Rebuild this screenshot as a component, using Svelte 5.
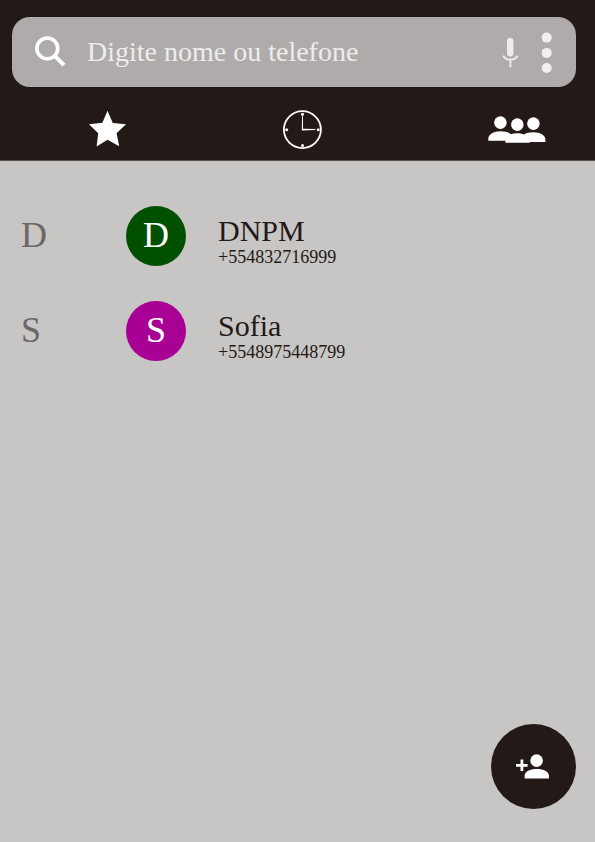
<script>
  let query = $state('');

  const contacts = [
    { name: 'DNPM', phone: '+554832716999', color: '#005000' },
    { name: 'Sofia', phone: '+5548975448799', color: '#a80094' }
  ];

  const shown = $derived(
    contacts.filter((c) => (c.name + c.phone).toLowerCase().includes(query.toLowerCase()))
  );
</script>

<div class="app">
  <header>
    <form class="search" role="search">
      <button type="submit" class="icon" aria-label="Buscar">
        <svg width="34" height="34" viewBox="33 34 34 34">
          <circle cx="47.3" cy="47.4" r="10.4" fill="none" stroke="#fff" stroke-width="3.7" />
          <path d="M54.5 54.7L64 64.2" stroke="#fff" stroke-width="4" />
        </svg>
      </button>
      <input type="text" bind:value={query} placeholder="Digite nome ou telefone" aria-label="Digite nome ou telefone" />
      <button type="button" class="icon" aria-label="Busca por voz">
        <svg width="18" height="32" viewBox="502 36 18 32">
          <rect x="507" y="38" width="6.4" height="18.4" rx="2.8" fill="#ededed" />
          <path d="M503.3 55.6C505.5 61 515.3 61 517.5 55.6M510.4 59.5V67.2" fill="none" stroke="#ededed" stroke-width="1.9" />
        </svg>
      </button>
      <button type="button" class="icon more" aria-label="Mais opções">
        <svg width="12" height="42" viewBox="541 31 12 42">
          <g fill="#f0f0f0">
            <circle cx="546.7" cy="37.6" r="5" />
            <circle cx="546.7" cy="52.9" r="5" />
            <circle cx="546.7" cy="68" r="5" />
          </g>
        </svg>
      </button>
    </form>

    <nav>
      <button type="button" class="icon" aria-label="Favoritos">
        <svg width="38" height="40" viewBox="89 109 38 40">
          <path d="M107.5 110.7L112.8 122.9L126 124.3L116.6 133.2L119.2 146.2L107.5 139.8L96.6 146.4L98.2 133.2L89 124.3L102.4 122.7Z" fill="#fff" />
        </svg>
      </button>
      <button type="button" class="icon" aria-label="Recentes">
        <svg width="40" height="40" viewBox="283 109 40 40">
          <circle cx="302.4" cy="129.6" r="18.5" fill="none" stroke="#fff" stroke-width="1.8" />
          <g fill="#fff">
            <circle cx="302.5" cy="114.2" r="1.5" />
            <circle cx="302.5" cy="145.4" r="1.5" />
            <circle cx="286.7" cy="129.7" r="1.5" />
            <circle cx="318.2" cy="129.7" r="1.5" />
            <path d="M302.1 115.5H302.9L303.1 128.8L315.3 129.1V130L301.8 130.4Z" />
          </g>
        </svg>
      </button>
      <button type="button" class="icon groups" aria-label="Contatos">
        <svg width="60" height="40" viewBox="487 109 60 40">
          <g fill="#fff">
            <circle cx="500.4" cy="122.6" r="6.3" />
            <circle cx="533.4" cy="123.6" r="6.3" />
            <circle cx="517.3" cy="124.6" r="6.3" />
            <path d="M488.3 140.8V138.5C488.3 134.3 494 131.2 500.4 131.2C505 131.2 508.6 132.3 510.8 134.2C514.8 132.8 520 132.8 523.8 134.4C526 133 529.5 132.2 533.4 132.2C539.8 132.2 545.4 135 545.4 139.2V141.9H529.6V142.8H505.4V140.8Z" />
          </g>
        </svg>
      </button>
    </nav>
  </header>

  <main>
    <ul>
      {#each shown as contact (contact.phone)}
        <li>
          <span class="index">{contact.name[0]}</span>
          <span class="avatar" style="background: {contact.color}">{contact.name[0]}</span>
          <div class="info">
            <span class="name">{contact.name}</span>
            <a href="tel:{contact.phone}">{contact.phone}</a>
          </div>
        </li>
      {/each}
    </ul>
  </main>

  <button type="button" class="fab" aria-label="Adicionar contato">
    <svg width="37" height="29" viewBox="515 752 37 29">
      <g fill="#fff">
        <circle cx="536.6" cy="760.6" r="6.3" />
        <path d="M524.6 778.6V775.6C524.6 771.6 530 769 536.7 769C543.4 769 548.9 771.6 548.9 775.6V778.6Z" />
        <path d="M516 763.9H520.5V759.5H523.3V763.9H527.6V766.7H523.3V771H520.5V766.7H516Z" />
      </g>
    </svg>
  </button>
</div>

<style>
  :global(body) {
    background: #c8c6c4;
  }

  .app {
    min-height: 100vh;
    font-family: 'Liberation Serif', 'Times New Roman', serif;
    color: #231916;
  }

  button {
    border: 0;
    padding: 0;
    cursor: pointer;
  }

  svg {
    display: block;
  }

  header {
    padding: 17px 0 0;
    background: #231916;
    border-bottom: 1px solid #5a4e4b;
  }

  .search {
    display: flex;
    align-items: center;
    height: 70px;
    margin: 0 19px 0 12px;
    padding: 0 23px 0 21px;
    border-radius: 18px;
    background: #afabaa;
  }

  .icon {
    flex: none;
    background: none;
  }

  .more {
    margin-left: 21px;
  }

  input {
    flex: 1;
    min-width: 0;
    margin: 0 20px;
    padding: 0;
    border: 0;
    outline: 0;
    background: none;
    color: #ededed;
    font: 28px/34px 'Liberation Serif', 'Times New Roman', serif;
  }

  input::placeholder {
    color: #ededed;
    opacity: 1;
  }

  nav {
    display: grid;
    grid-template-columns: repeat(3, 1fr);
    place-items: center;
    align-content: center;
    box-sizing: border-box;
    height: 73px;
    padding: 10px 0 0 10px;
  }

  .groups {
    padding-left: 39px;
  }

  ul {
    display: flex;
    flex-direction: column;
    gap: 35px;
    margin: 0;
    padding: 45px 21px;
    list-style: none;
  }

  li {
    display: flex;
    align-items: flex-end;
  }

  .index,
  .avatar {
    flex: none;
    box-sizing: border-box;
    height: 60px;
    font-size: 36px;
    line-height: 58px;
  }

  .index {
    width: 105px;
    color: #6a6867;
  }

  .avatar {
    width: 60px;
    border-radius: 50%;
    color: #fff;
    text-align: center;
  }

  .info {
    display: flex;
    flex-direction: column;
    margin-left: 32px;
  }

  .name {
    font-size: 30px;
    line-height: 34px;
  }

  .info a {
    color: inherit;
    font-size: 18px;
    line-height: 18px;
    text-decoration: none;
  }

  .fab {
    position: fixed;
    right: 19px;
    bottom: 33px;
    display: grid;
    place-items: center;
    width: 85px;
    height: 85px;
    border-radius: 50%;
    background: #231916;
  }
</style>
